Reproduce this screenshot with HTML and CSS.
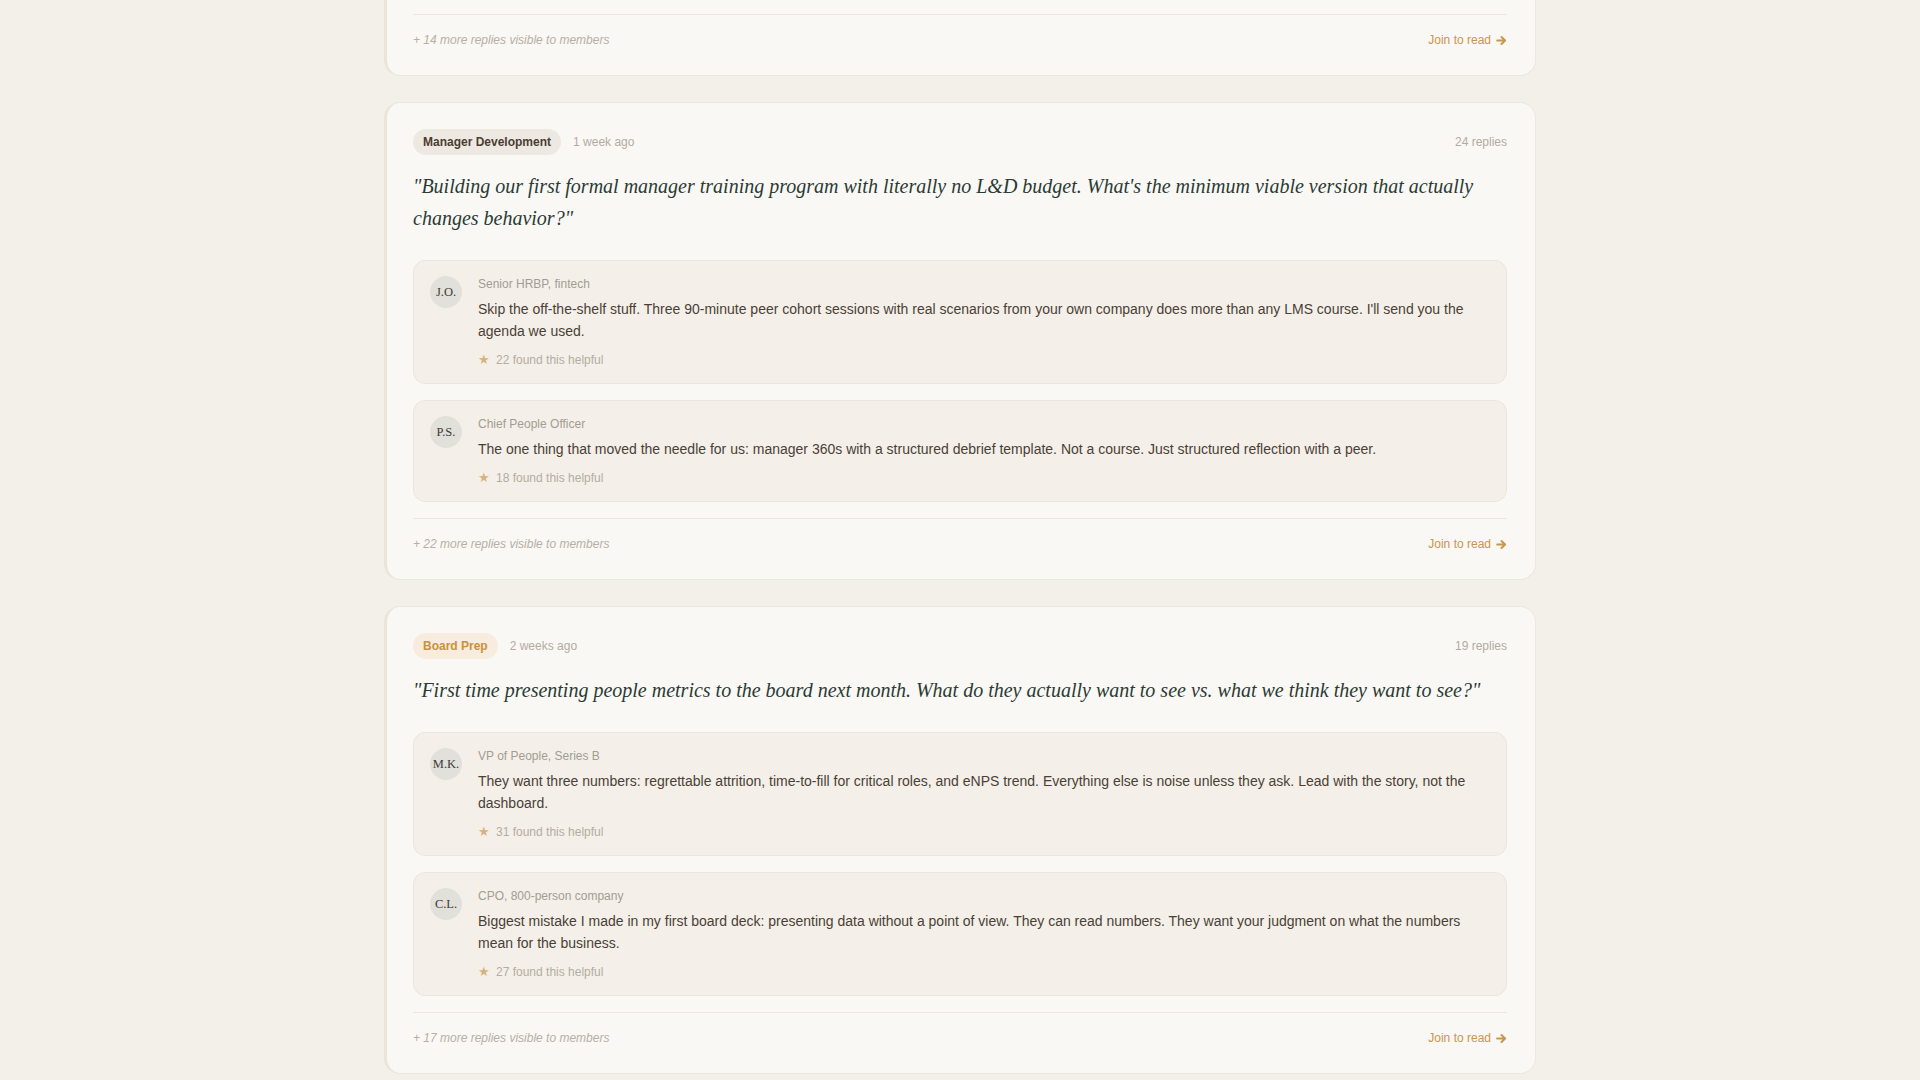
FILE: index.html
```html
<!DOCTYPE html>
<html lang="en">
<head>
<meta charset="utf-8">
<title>Community Threads</title>
<link rel="stylesheet" href="styles.css">
</head>
<body>
<main class="feed">

  <article class="thread">
    <div class="thread-head">
      <span class="tag tag-neutral">Compensation</span>
      <span class="time">3 days ago</span>
      <span class="count">16 replies</span>
    </div>
    <h2 class="question">"Employees keep asking for salary bands and we're not legally required to publish them yet. Did anyone go transparent early, and what actually broke when you did it?"</h2>
    <div class="replies">
      <div class="reply">
        <div class="avatar">A.R.</div>
        <div class="reply-body">
          <div class="role">Head of Total Rewards, SaaS</div>
          <p class="reply-text">We published bands internally first and gave managers two weeks of talking points before anything went out. The hardest part wasn't the ranges themselves, it was the handful of people sitting below them who suddenly had questions.</p>
          <div class="helpful"><span class="star">★</span>19 found this helpful</div>
        </div>
      </div>
      <div class="reply">
        <div class="avatar">D.N.</div>
        <div class="reply-body">
          <div class="role">People Ops Lead</div>
          <p class="reply-text">Fix the outliers before you publish. Budget for that up front or the launch will be remembered for the wrong reasons.</p>
          <div class="helpful"><span class="star">★</span>12 found this helpful</div>
        </div>
      </div>
    </div>
    <div class="thread-foot">
      <span class="more">+ 14 more replies visible to members</span>
      <a class="join" href="#">Join to read <svg class="arrow" viewBox="0 0 10 10" width="11" height="11" aria-hidden="true"><path d="M1 5h7M5 1.8 8.3 5 5 8.2" fill="none" stroke="currentColor" stroke-width="1.8" stroke-linecap="round" stroke-linejoin="round"/></svg></a>
    </div>
  </article>

  <article class="thread">
    <div class="thread-head">
      <span class="tag tag-neutral">Manager Development</span>
      <span class="time">1 week ago</span>
      <span class="count">24 replies</span>
    </div>
    <h2 class="question">"Building our first formal manager training program with literally no L&amp;D budget. What's the minimum viable version that actually changes behavior?"</h2>
    <div class="replies">
      <div class="reply">
        <div class="avatar">J.O.</div>
        <div class="reply-body">
          <div class="role">Senior HRBP, fintech</div>
          <p class="reply-text">Skip the off-the-shelf stuff. Three 90-minute peer cohort sessions with real scenarios from your own company does more than any LMS course. I'll send you the agenda we used.</p>
          <div class="helpful"><span class="star">★</span>22 found this helpful</div>
        </div>
      </div>
      <div class="reply">
        <div class="avatar">P.S.</div>
        <div class="reply-body">
          <div class="role">Chief People Officer</div>
          <p class="reply-text">The one thing that moved the needle for us: manager 360s with a structured debrief template. Not a course. Just structured reflection with a peer.</p>
          <div class="helpful"><span class="star">★</span>18 found this helpful</div>
        </div>
      </div>
    </div>
    <div class="thread-foot">
      <span class="more">+ 22 more replies visible to members</span>
      <a class="join" href="#">Join to read <svg class="arrow" viewBox="0 0 10 10" width="11" height="11" aria-hidden="true"><path d="M1 5h7M5 1.8 8.3 5 5 8.2" fill="none" stroke="currentColor" stroke-width="1.8" stroke-linecap="round" stroke-linejoin="round"/></svg></a>
    </div>
  </article>

  <article class="thread">
    <div class="thread-head">
      <span class="tag tag-gold">Board Prep</span>
      <span class="time">2 weeks ago</span>
      <span class="count">19 replies</span>
    </div>
    <h2 class="question">"First time presenting people metrics to the board next month. What do they actually want to see vs. what we think they want to see?"</h2>
    <div class="replies">
      <div class="reply">
        <div class="avatar">M.K.</div>
        <div class="reply-body">
          <div class="role">VP of People, Series B</div>
          <p class="reply-text">They want three numbers: regrettable attrition, time-to-fill for critical roles, and eNPS trend. Everything else is noise unless they ask. Lead with the story, not the dashboard.</p>
          <div class="helpful"><span class="star">★</span>31 found this helpful</div>
        </div>
      </div>
      <div class="reply">
        <div class="avatar">C.L.</div>
        <div class="reply-body">
          <div class="role">CPO, 800-person company</div>
          <p class="reply-text">Biggest mistake I made in my first board deck: presenting data without a point of view. They can read numbers. They want your judgment on what the numbers mean for the business.</p>
          <div class="helpful"><span class="star">★</span>27 found this helpful</div>
        </div>
      </div>
    </div>
    <div class="thread-foot">
      <span class="more">+ 17 more replies visible to members</span>
      <a class="join" href="#">Join to read <svg class="arrow" viewBox="0 0 10 10" width="11" height="11" aria-hidden="true"><path d="M1 5h7M5 1.8 8.3 5 5 8.2" fill="none" stroke="currentColor" stroke-width="1.8" stroke-linecap="round" stroke-linejoin="round"/></svg></a>
    </div>
  </article>

</main>
</body>
</html>
```

FILE: styles.css
```css
* { box-sizing: border-box; }

html, body {
  margin: 0;
  padding: 0;
  background: #f3efe9;
  font-family: "Liberation Sans", Arial, sans-serif;
  color: #4a3f36;
}

.feed {
  width: 1152px;
  margin: -402px auto 0;
  display: flex;
  flex-direction: column;
  gap: 26px;
  padding-bottom: 40px;
}

.thread {
  background: #faf8f4;
  border: 1px solid #ece7df;
  border-left: 3px solid #ebe4d9;
  border-radius: 16px;
  padding: 26px 28px 27px 26px;
}

.thread-head {
  display: flex;
  align-items: center;
  gap: 12px;
  height: 26px;
}

.tag {
  display: inline-block;
  font-size: 12px;
  font-weight: 700;
  line-height: 16px;
  padding: 5px 10px;
  border-radius: 999px;
}

.tag-neutral {
  background: #ede9e2;
  color: #4b3c31;
}

.tag-gold {
  background: #f7ecdd;
  color: #c7913f;
}

.time {
  font-size: 12px;
  color: #b2aba1;
}

.count {
  margin-left: auto;
  font-size: 12px;
  color: #b2aba1;
}

.question {
  margin: 15px 0 26px;
  font-family: "Liberation Serif", "Times New Roman", serif;
  font-style: italic;
  font-weight: 400;
  font-size: 20px;
  line-height: 32px;
  color: #2a3b34;
}

.replies {
  display: flex;
  flex-direction: column;
  gap: 16px;
}

.reply {
  display: flex;
  gap: 16px;
  background: #f4f0e9;
  border: 1px solid #ebe6dd;
  border-radius: 12px;
  padding: 15px 16px;
}

.avatar {
  flex: 0 0 32px;
  width: 32px;
  height: 32px;
  border-radius: 50%;
  background: #e2e0da;
  display: flex;
  align-items: center;
  justify-content: center;
  font-family: "Liberation Serif", "Times New Roman", serif;
  font-size: 12.5px;
  color: #3b3a36;
}

.reply-body {
  flex: 1;
  min-width: 0;
}

.role {
  font-size: 12px;
  line-height: 16px;
  color: #a39c92;
}

.reply-text {
  margin: 6px 0 0;
  font-size: 14px;
  line-height: 22px;
  color: #4a3f36;
}

.helpful {
  margin-top: 10px;
  font-size: 12px;
  line-height: 16px;
  color: #b3aca2;
  display: flex;
  align-items: center;
  gap: 6px;
}

.star {
  color: #d8b27c;
  font-size: 13px;
  line-height: 16px;
}

.thread-foot {
  margin-top: 16px;
  border-top: 1px solid #ece7df;
  padding-top: 17px;
  display: flex;
  justify-content: space-between;
  align-items: center;
  line-height: 16px;
}

.more {
  font-size: 12px;
  font-style: italic;
  color: #b6afa5;
}

.join {
  font-size: 12px;
  color: #c9964d;
  text-decoration: none;
  display: inline-flex;
  align-items: center;
  gap: 5px;
}

.arrow {
  display: block;
}
```
